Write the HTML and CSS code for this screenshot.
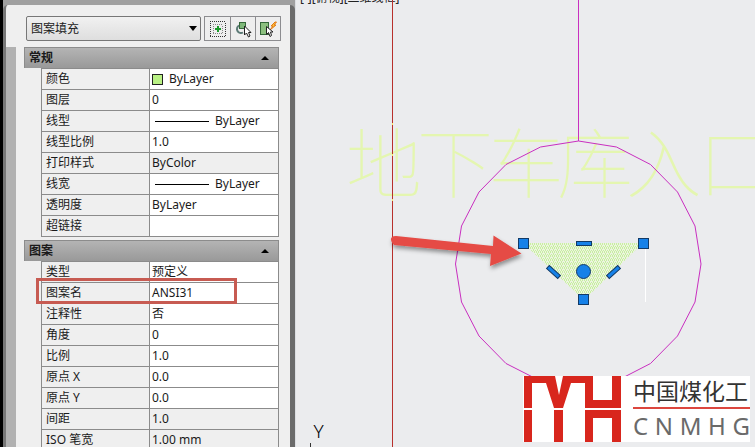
FILE: index.html
```html
<!DOCTYPE html>
<html lang="zh-CN">
<head>
<meta charset="utf-8">
<title>图案填充</title>
<link rel="stylesheet" href="styles.css">
</head>
<body>
<aside class="palette">
  <div class="sheet">
    <div class="toolbar">
      <div class="picker">
        <select aria-label="对象类型"><option>图案填充</option></select>
        <svg class="caret" width="8" height="5" viewBox="0 0 8 5"><path d="M0 0h8L4 5z"/></svg>
      </div>
      <div class="tools">
        <button type="button" aria-label="切换 PICKADD"><svg width="18" height="18" viewBox="0 0 18 18"><path d="M1 1.500H17M1 16.500H17M1.500 3V16M16.500 3V16" fill="none" stroke="#333" stroke-dasharray="1 1"/><path d="M4 4.500H14M4 13.500H14M4.500 6V13M13.500 6V13" fill="none" stroke="#888" stroke-dasharray="1 1"/><path d="M9 6v6M6 9h6" stroke="#1b9a2a" stroke-width="2"/></svg></button>
        <button type="button" aria-label="选择对象"><svg width="18" height="18" viewBox="0 0 18 18"><path d="M5 5.500a4 4 0 1 0 4 7" fill="none" stroke="#5c7a76" stroke-width="2"/><rect x="5.500" y="2.500" width="6" height="6" fill="#7fb87a" stroke="#35683a"/><path d="M10.500 6v9l2-2 2 4 1.500-1-1.500-3.500h2.500z" fill="#fff" stroke="#222"/></svg></button>
        <button type="button" aria-label="快速选择"><svg width="18" height="18" viewBox="0 0 18 18"><rect x="1.500" y="2.500" width="8" height="12" fill="#8cc07f" stroke="#35683a"/><path d="M16 2l-4 4h2l-3 4 6-5h-2l2.500-3z" fill="#ffc233" stroke="#e07a1a"/><path d="M7.500 6.500v8l2-2 1.500 4 1.500-1-1-3.500h2.500z" fill="#fff" stroke="#222"/></svg></button>
      </div>
    </div>
    <div class="content">
      <div class="rail"></div>
      <div class="groups">
        <section class="group">
          <button type="button" class="heading"><span>常规</span><svg width="8" height="4" viewBox="0 0 8 4"><path d="M0 4h8L4 0z"/></svg></button>
          <table>
            <tr><th scope="row">颜色</th><td><div class="sample"><i class="swatch"></i>ByLayer</div></td></tr>
            <tr><th scope="row">图层</th><td>0</td></tr>
            <tr><th scope="row">线型</th><td><div class="sample"><i class="line"></i>ByLayer</div></td></tr>
            <tr><th scope="row">线型比例</th><td>1.0</td></tr>
            <tr class="locked"><th scope="row">打印样式</th><td>ByColor</td></tr>
            <tr><th scope="row">线宽</th><td><div class="sample"><i class="line"></i>ByLayer</div></td></tr>
            <tr><th scope="row">透明度</th><td>ByLayer</td></tr>
            <tr><th scope="row">超链接</th><td></td></tr>
          </table>
        </section>
        <section class="group">
          <button type="button" class="heading"><span>图案</span><svg width="8" height="4" viewBox="0 0 8 4"><path d="M0 4h8L4 0z"/></svg></button>
          <table>
            <tr><th scope="row">类型</th><td>预定义</td></tr>
            <tr><th scope="row">图案名</th><td>ANSI31</td></tr>
            <tr><th scope="row">注释性</th><td>否</td></tr>
            <tr><th scope="row">角度</th><td>0</td></tr>
            <tr><th scope="row">比例</th><td>1.0</td></tr>
            <tr><th scope="row">原点 X</th><td>0.0</td></tr>
            <tr><th scope="row">原点 Y</th><td>0.0</td></tr>
            <tr class="locked"><th scope="row">间距</th><td>1.0</td></tr>
            <tr class="locked"><th scope="row">ISO 笔宽</th><td>1.00 mm</td></tr>
          </table>
          <div class="highlight"></div>
        </section>
      </div>
    </div>
  </div>
</aside>
<main class="viewport">
  <svg class="drawing" viewBox="296 0 459 447" preserveAspectRatio="xMinYMin slice">
    <defs>
      <pattern id="hatch" width="4" height="4" patternUnits="userSpaceOnUse">
        <rect width="4" height="4" fill="#ecf4e0"/>
        <path d="M0 0h1v1h-1zM2 0h1v1h-1zM1 1h1v1h-1zM3 2h1v1h-1zM1 2h1v1h-1zM0 3h1v1h-1zM2 3h1v1h-1z" fill="#c8efa0"/>
      </pattern>
      <filter id="shade" x="-10%" y="-20%" width="120%" height="160%"><feDropShadow dx="1" dy="3" stdDeviation="2" flood-opacity=".4"/></filter>
    </defs>
    <text class="view-label" x="300" y="2">[-][俯视][二维线框]</text>
    <text class="note" y="192" x="346 417 488 557 626 698">地下车库入口</text>
    <path d="M392.500 0V447" stroke="#b8302c"/>
    <path d="M392 124h1M392 155h1M392 200h1" stroke="#f6e860" stroke-width="2"/>
    <path class="magenta" d="M578.500 0V141L616.500 147 650.500 164.500 677.500 192 695 226 701 264 695 302 677.500 336 650.500 363.500 616.500 381 578.500 387 540.500 381 506 363.500 479 336 461.500 302 455.500 264 461.500 226 479 192 506 164.500 540.500 147 578.500 141"/>
    <path d="M645.500 248V302" stroke="#fff"/>
    <path d="M523 243H643L584 300z" fill="url(#hatch)"/>
    <path d="M396 236L493 246 493.500 235.500 521.500 253.500 490 266 491 254 394 245Q389 240 392 237 393 236 396 236z" fill="#e54b45" filter="url(#shade)"/>
    <g class="grips">
      <rect x="518.500" y="238.500" width="10" height="10"/>
      <rect x="638.500" y="238.500" width="10" height="10"/>
      <rect x="578.500" y="294.500" width="10" height="10"/>
      <rect x="576.500" y="241.500" width="15" height="4"/>
      <circle cx="583.500" cy="271.500" r="7"/>
      <rect x="546" y="270" width="15" height="4" transform="rotate(42 553.500 272)"/>
      <rect x="606" y="270" width="15" height="4" transform="rotate(-42 613.500 272)"/>
    </g>
    <text class="axis" x="318.500" y="438">Y</text>
    <path d="M310.500 443V447" stroke="#333"/>
  </svg>
  <div class="brand">
    <svg width="97" height="66" viewBox="0 0 97 66" fill="#d8261d">
      <path d="M0 0H31L35 19 39 0H69V24H88V0H97V32H61V7H47L39 32H30L22 7H8V32H0z"/>
      <path d="M0 34H8V66H0zM30 34H39V66H30zM61 34H97V66H88V42H69V66H61z"/>
    </svg>
    <div class="brand-text">
      <div class="brand-name">中国煤化工</div>
      <div class="brand-code"><span>C</span><span>N</span><span>M</span><span>H</span><span>G</span></div>
    </div>
  </div>
</main>
</body>
</html>
```
FILE: styles.css
```css
* { box-sizing: border-box; }

body {
  margin: 0;
  height: 100vh;
  display: flex;
  overflow: hidden;
  background: #ebecee;
  color: #1a1a1a;
  font: 12px/20px "Noto Sans", "Noto Sans CJK SC", sans-serif;
}

button, select { font: inherit; color: inherit; }

.palette {
  flex: none;
  width: 296px;
  padding-top: 5px;
  background: #a0a0a0;
  border-left: 3px solid #000;
  border-right: 1px solid #dcdee2;
  overflow: hidden;
}

.sheet {
  height: 100%;
  border-left: 3px solid #777;
  border-right: 5px solid #6b6b6b;
  border-radius: 5px 5px 0 0;
  background: #efefef;
  display: flex;
  flex-direction: column;
}

.toolbar {
  display: flex;
  gap: 3px;
  padding: 11px 9px 6px 20px;
}

.picker {
  position: relative;
  flex: 1;
}

.picker select {
  appearance: none;
  width: 100%;
  height: 25px;
  padding: 0 4px;
  border: 1px solid #777;
  border-radius: 2px;
  background: linear-gradient(#f1f1f1, #dedede);
}

.caret {
  position: absolute;
  right: 4px;
  top: 10px;
}

.tools {
  display: flex;
  border: 1px solid #8d8d90;
}

.tools button {
  width: 25px;
  height: 23px;
  padding: 0;
  border: 0;
  background: #eee;
  display: grid;
  place-items: center;
}

.tools button + button { border-left: 1px solid #8d8d90; }

.content {
  display: flex;
  gap: 8px;
  flex: 1;
  min-height: 0;
}

.rail {
  width: 10px;
  background: #b1b1b1;
}

.groups {
  flex: 1;
  margin-right: 11px;
}

.group {
  position: relative;
  margin-bottom: 3px;
}

.heading {
  width: 100%;
  height: 21px;
  padding: 0 9px 0 4px;
  border: 1px solid #8c8c8c;
  border-bottom: 0;
  background: linear-gradient(#b4b4b4, #999);
  display: flex;
  align-items: center;
  justify-content: space-between;
  font-weight: 700;
}

table {
  width: calc(100% - 17px);
  margin-left: 17px;
  border-collapse: collapse;
  table-layout: fixed;
}

th, td {
  height: 21px;
  border: 1px solid #8b8b8b;
  text-align: left;
  white-space: nowrap;
}

th {
  width: 108px;
  padding: 0 4px;
  font-weight: 400;
}

td {
  padding: 0 2px;
  background: #fff;
}

.locked td { background: #efefef; }

.sample {
  display: flex;
  align-items: center;
  gap: 6px;
}

.swatch {
  width: 11px;
  height: 11px;
  border: 1px solid #222;
  background: #b9f184;
}

.line {
  width: 54px;
  margin-left: 3px;
  border-top: 1px solid #000;
}

.highlight {
  position: absolute;
  left: 12px;
  top: 38px;
  right: 42px;
  height: 26px;
  border: 3px solid #c75b52;
}

.viewport {
  position: relative;
  flex: 1;
  min-width: 0;
}

.drawing {
  display: block;
  width: 100%;
  height: 100%;
}

.view-label { font-size: 12px; fill: #222; }

.note {
  font-family: "Noto Sans CJK SC", sans-serif;
  font-size: 76px;
  font-weight: 100;
  fill: #e4f6b0;
}

.magenta { fill: none; stroke: #c92fc0; }

.grips { fill: #1681e8; stroke: #123a66; }

.axis {
  font-family: "Noto Sans", sans-serif;
  font-size: 19px;
  font-weight: 300;
  text-anchor: middle;
  fill: #000;
}

.brand {
  position: absolute;
  right: 5px;
  bottom: 5px;
  display: flex;
  gap: 12px;
  padding-left: 1px;
  background: #fff;
}

.brand-text {
  width: 117px;
  font-family: "Noto Sans", "Noto Sans CJK SC", sans-serif;
}

.brand-name {
  height: 33px;
  border-bottom: 2px solid #dc463e;
  font-size: 23px;
  line-height: 30px;
  white-space: nowrap;
  color: #333;
}

.brand-code {
  display: flex;
  justify-content: space-between;
  font-size: 24px;
  line-height: 33px;
  color: #6a6a6a;
}
```
